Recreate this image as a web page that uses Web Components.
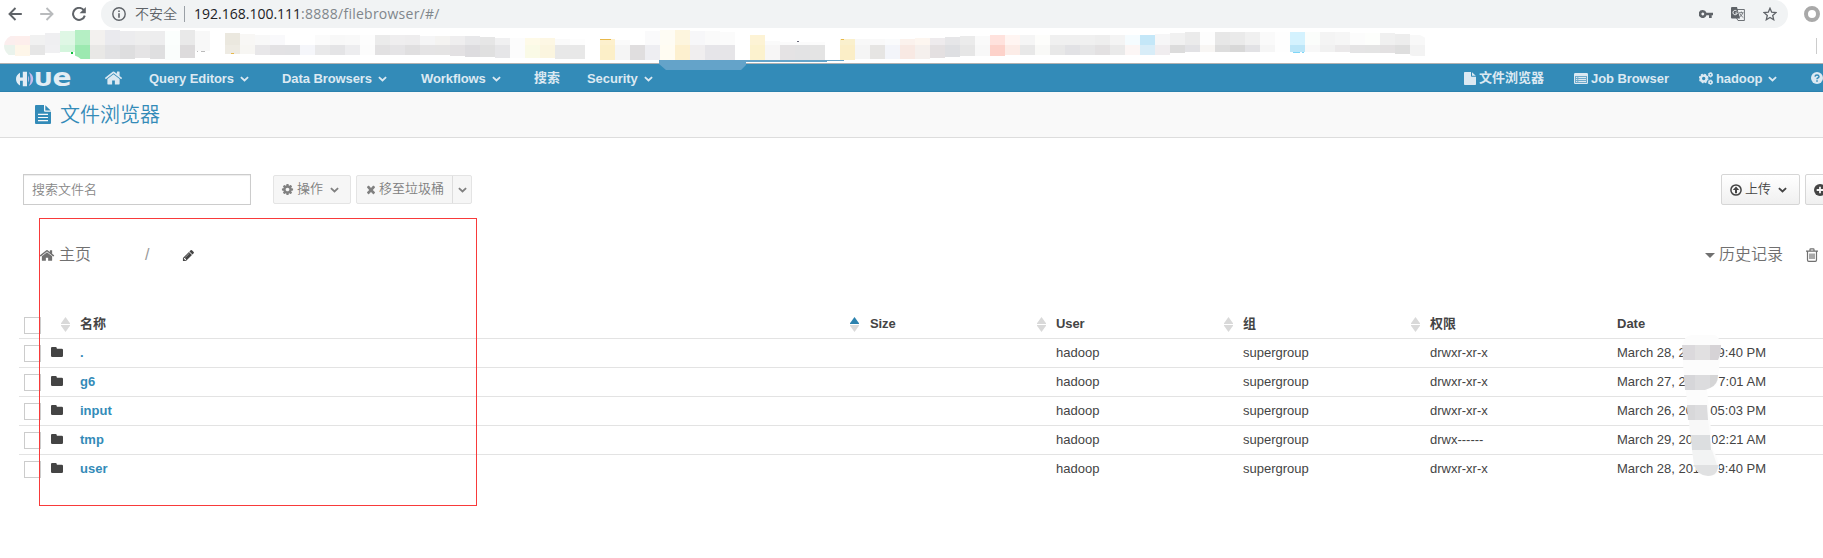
<!DOCTYPE html>
<html lang="zh">
<head>
<meta charset="utf-8">
<title>Hue - 文件浏览器</title>
<style>
html,body{margin:0;padding:0;background:#fff;overflow:hidden}
body{width:1823px;height:558px;font:13px/20px "Liberation Sans","Noto Sans CJK SC",sans-serif;color:#444}
</style>
</head>
<body>
<hue-page></hue-page>
<script>
const ICONS = {
  home:['0 0 1792 1792','<path d="M1472 992v480q0 26-19 45t-45 19h-384v-384h-256v384h-384q-26 0-45-19t-19-45v-480q0-1 .5-3t.5-3l575-474 575 474q1 2 1 6zm223-69l-62 74q-8 9-21 11h-3q-13 0-21-7l-692-577-692 577q-12 8-24 7-13-2-21-11l-62-74q-8-10-7-23.5t11-21.5l719-599q32-26 76-26t76 26l244 204v-195q0-14 9-23t23-9h192q14 0 23 9t9 23v408l219 182q10 8 11 21.5t-7 23.5z"/>'],
  cog:['0 0 1792 1792','<path d="M1152 896q0-106-75-181t-181-75-181 75-75 181 75 181 181 75 181-75 75-181zm512-109v222q0 12-8 23t-20 13l-185 28q-19 54-39 91 35 50 107 138 10 12 10 25t-9 23q-27 37-99 108t-94 71q-12 0-26-9l-138-108q-44 23-91 38-16 136-29 186-7 28-36 28h-222q-14 0-24.5-8.5t-11.5-21.5l-28-184q-49-16-90-37l-141 107q-10 9-25 9-14 0-25-11-126-114-165-168-7-10-7-23 0-12 8-23 15-21 51-66.5t54-70.5q-27-50-41-99l-183-27q-13-2-21-12.5t-8-23.5v-222q0-12 8-23t19-13l186-28q14-46 39-92-40-57-107-138-10-12-10-24 0-10 9-23 26-36 98.5-107.5t94.5-71.5q13 0 26 10l138 107q44-23 91-38 16-136 29-186 7-28 36-28h222q14 0 24.5 8.5t11.5 21.5l28 184q49 16 90 37l142-107q9-9 24-9 13 0 25 10 129 119 165 170 7 8 7 22 0 12-8 23-15 21-51 66.5t-54 70.5q26 50 41 98l183 28q13 2 21 12.5t8 23.5z"/>'],
  times:['0 0 1792 1792','<path d="M1490 1322q0 40-28 68l-136 136q-28 28-68 28t-68-28l-294-294-294 294q-28 28-68 28t-68-28l-136-136q-28-28-28-68t28-68l294-294-294-294q-28-28-28-68t28-68l136-136q28-28 68-28t68 28l294 294 294-294q28-28 68-28t68 28l136 136q28 28 28 68t-28 68l-294 294 294 294q28 28 28 68z"/>'],
  pencil:['0 0 1792 1792','<path d="M491 1536l91-91-235-235-91 91v107h128v128h107zm523-928q0-22-22-22-10 0-17 7l-542 542q-7 7-7 17 0 22 22 22 10 0 17-7l542-542q7-7 7-17zm-54-192l416 416-832 832h-416v-416zm683 96q0 53-37 90l-166 166-416-416 166-165q36-38 90-38 53 0 91 38l235 234q37 39 37 91z"/>'],
  folder:['0 0 12 10','<path d="M1 0h3.600q1 0 1.200 1v.8h5q1.200 0 1.200 1.200v5.800q0 1.200-1.200 1.200H1.200Q0 10 0 8.800V1.200Q0 0 1 0z"/>'],
  chevron:['0 0 9 6','<path d="M.9 1.100L4.500 4.500 8.100 1.100" fill="none" stroke="currentColor" stroke-width="1.800"/>'],
  file:['0 0 12 14','<path d="M.8 0H7v4.300q0 .7.7.7H12v8.200q0 .8-.8.8H.8q-.8 0-.8-.8V.8Q0 0 .8 0zM8 .2L11.800 4H8z"/>'],
  filetext:['0 0 16 20','<path fill-rule="evenodd" d="M1 0h8v6q0 1 1 1h6v12q0 1-1 1H1q-1 0-1-1V1q0-1 1-1zM10.300.3L15.700 5.700h-5.400zM3 9.300v1.300h10V9.300zM3 12.500v1.300h10v-1.300zM3 15.700V17h10v-1.300z"/>'],
  list:['0 0 14 11','<path fill-rule="evenodd" d="M1.200 0h11.600Q14 0 14 1.200v8.600q0 1.200-1.200 1.200H1.200Q0 11 0 9.800V1.200Q0 0 1.200 0zM1 3v7h12V3z"/><path d="M1 3h12v7H1z" opacity=".35"/><path d="M2 4h1.300v1H2zm2.300 0H12v1H4.300zM2 6h1.300v1H2zm2.300 0H12v1H4.300zM2 8h1.300v1H2zm2.300 0H12v1H4.300z"/>'],
  cogs:['0 0 14 13','<g fill="none" stroke="currentColor"><circle cx="4.700" cy="6.500" r="2.900" stroke-width="2.400"/><circle cx="4.700" cy="6.500" r="4.200" stroke-width="1.300" stroke-dasharray="1.900 1.400"/><circle cx="11.500" cy="2.800" r="1.500" stroke-width="1.500"/><circle cx="11.500" cy="2.800" r="2.200" stroke-width=".9" stroke-dasharray="1.300 1"/><circle cx="11.500" cy="10.200" r="1.500" stroke-width="1.500"/><circle cx="11.500" cy="10.200" r="2.200" stroke-width=".9" stroke-dasharray="1.300 1"/></g>'],
  help:['0 0 12 12','<circle cx="6" cy="6" r="6"/><path d="M4 4.600Q4.200 3 6 3t2 1.500Q8 5.400 7 5.900T6 7.200M6 8.200v1.500" fill="none" stroke="#338bb8" stroke-width="1.500"/>'],
  up:['0 0 12 12','<circle cx="6" cy="6" r="5.100" fill="none" stroke="currentColor" stroke-width="1.500"/><path d="M6 2.600L9.200 6H7v3.200H5V6H2.800z"/>'],
  plus:['0 0 12 12','<circle cx="6" cy="6" r="6"/><path d="M6 2.700v6.600M2.700 6h6.600" stroke="#f7f7f7" stroke-width="1.800"/>'],
  caret:['0 0 10 5','<path d="M0 0h10L5 5z"/>'],
  trash:['0 0 12 14','<path d="M0 3.200h12M4 3V1.500Q4 .8 4.700.8h2.600Q8 .8 8 1.500V3M1.500 3.200v8.800q0 1.300 1.200 1.300h6.600q1.200 0 1.200-1.300V3.200M4 5.400v5.700M6 5.400v5.700M8 5.400v5.700" fill="none" stroke="currentColor" stroke-width="1.200"/>'],
  back:['0 0 14 14','<path d="M13.800 7H1.500M7.500 1L1.500 7l6 6" fill="none" stroke="currentColor" stroke-width="1.900"/>'],
  forward:['0 0 14 14','<path d="M.2 7h12.300M6.500 1l6 6-6 6" fill="none" stroke="currentColor" stroke-width="1.900"/>'],
  reload:['0 0 14 14','<path d="M11.800 3.200A6 6 0 1 0 12.800 8.600" fill="none" stroke="currentColor" stroke-width="2"/><path d="M13.800 0v6.200H7.600z"/>'],
  info:['0 0 14 14','<circle cx="7" cy="7" r="6.200" fill="none" stroke="currentColor" stroke-width="1.400"/><path d="M6.200 3.500h1.600V5H6.200zM6.200 6.200h1.600v4.500H6.200z"/>'],
  key:['0 0 14 8','<path fill-rule="evenodd" d="M3.800 0a4 4 0 0 1 3.700 2.700H14v2.600h-1.300V8H10V5.300H7.500A4 4 0 1 1 3.800 0zM3.800 2.600a1.400 1.400 0 1 0 .01 0z"/>'],
  translate:['0 0 14 14','<path d="M6 2.500h7.400v11H7L5.500 11" fill="none" stroke="currentColor" stroke-width=".9"/><path d="M1 0h5l3 11.500H1q-1 0-1-1V1q0-1 1-1z"/><path d="M6 4.400A2.200 2.200 0 1 0 6.300 6H4.300" fill="none" stroke="#f1f3f4" stroke-width="1"/><path d="M8 5.700h4.500M10.300 4.500v1.200M11.800 5.900Q11 8.800 8.300 10M8.800 6.500q1 2.500 3.500 4" fill="none" stroke="currentColor" stroke-width=".8"/>'],
  star:['0 0 14 14','<path d="M7 1.200l1.700 4 4.300.4-3.300 2.800 1 4.300L7 10.400l-3.700 2.300 1-4.300L1 5.600l4.300-.4z" fill="none" stroke="currentColor" stroke-width="1.300"/>'],
  ring:['0 0 16 16','<circle cx="8" cy="8" r="6" fill="none" stroke="currentColor" stroke-width="4"/>']
};

class UiIcon extends HTMLElement{
  connectedCallback(){
    const [box,body]=ICONS[this.getAttribute('name')];
    const w=this.getAttribute('w'),h=this.getAttribute('h')||w;
    this.attachShadow({mode:'open'}).innerHTML=`<style>:host{display:block;flex:none;width:${w}px;height:${h}px}svg{display:block}</style>
    <svg width="${w}" height="${h}" viewBox="${box}" fill="currentColor" preserveAspectRatio="none">${body}</svg>`;
  }
}
customElements.define('ui-icon',UiIcon);

const define=(name,html)=>customElements.define(name,class extends HTMLElement{
  constructor(){
    super();
    const t=document.createElement('template');
    t.innerHTML=typeof html==='function'?html():html;
    this.attachShadow({mode:'open'}).append(t.content.cloneNode(true));
  }
});

define('browser-bar',`<style>
:host{display:flex;height:28px;align-items:center;background:#fff;color:#5f6368;padding-left:8px;box-sizing:border-box}
.f{color:#b9bbbd;margin:0 18px}
.pill{flex:none;margin-left:15px;width:1687px;height:28px;box-sizing:border-box;background:#f1f3f4;border-radius:14px;display:flex;align-items:center;padding:0 11px 0 11px}
.warn{font:14px/28px "Noto Sans CJK SC",sans-serif;font-weight:350;margin:-2px 0 0 9px;width:42px;white-space:nowrap}
.sep{width:1px;height:16px;background:#9aa0a6;margin:0 9px 0 7px}
.url{font:14px/26px "Open Sans",sans-serif;color:#80868b;white-space:nowrap;flex:1;letter-spacing:.25px}
.url b{font-weight:400;color:#202124;letter-spacing:0}
</style>
<ui-icon name="back" w="14"></ui-icon><ui-icon class="f" name="forward" w="14"></ui-icon><ui-icon name="reload" w="14"></ui-icon>
<div class="pill"><ui-icon name="info" w="14"></ui-icon><span class="warn">不安全</span><span class="sep"></span><span class="url"><b>192.168.100.111</b>:8888/filebrowser/#/</span>
<ui-icon name="key" w="14" h="8"></ui-icon><ui-icon name="translate" w="14" style="margin:0 18px"></ui-icon><ui-icon name="star" w="14"></ui-icon></div>
<ui-icon name="ring" w="16" style="margin-left:16px;color:#a9a9a9"></ui-icon>`);

/* Blurred bookmarks: column index, top y, bottom y, upper shade, lower shade. */
const CELLS=`0 36 55 fbeeee eaf3ec|1 36 56 fdeeec fef6e9|2 35 55 f1f1f1 e6e6e6|3 33 53 efeff1 f0f0f2|4 31 52 dff7e5 d4f5dd|5 30 59 b5efc4 9ce9b0|6 30 59 f3f1ef e9e8e6|7 30 59 eaeaee e2e2e4|8 31 59 ececee dededf|9 31 58 eeeeee e5e4e5|10 31 59 ededee dfdfe0|11 31 60 fbfefd fafdfc|12 30 58 e9e9e9 dddbdc|13 31 51 f8f8f8 f8f8f8|15 33 54 ebe8df eeebe3|16 34 54 f8f7f5 f7f6f3|17 35 55 f8f8f8 e8e7e9|18 35 55 f9f9fb e3e2e4|19 45 55 ffffff e2e2e4|20 45 55 ffffff f5f6fa|21 35 55 fbfbfb e9e9ea|22 35 55 f8f8f8 e4e4e6|23 35 55 f9f9f9 ededef|24 35 55 fdfdfd fcfcfc|25 35 55 ebebeb e2e1e2|26 35 55 efeeef e5e4e6|27 35 55 eeedee e0dfe0|28 36 55 f5f5f6 e5e4e5|29 36 55 f4f3f1 e5e4e4|30 36 56 efeeef e3e1e3|31 36 57 e8e8ea dddcdf|32 37 57 e6e6e6 e0e0e0|33 38 58 f0f0f1 e6e6e8|34 38 58 fcfcfc fcfcfc|35 38 58 fefae8 fafae6|36 38 58 fdf7e4 fbf5df|37 39 59 fafafa e8e8e8|38 39 59 fdfdfd e8e8e8|40 39 60 fdf0cd fcefc8|41 40 60 fafafa f5f5f5|42 45 60 ffffff e0dedf|43 31 60 fafafb eeeef2|44 30 60 fefcf4 fffcf2|45 30 60 fdf5de fdf0cf|46 31 60 f7f7f9 f0eeef|47 31 60 fafafa e6e5e9|48 32 60 fbfbfb e6e5e8|50 35 60 fdf3d5 fcf2ce|51 41 60 fafafa f7f6f6|52 42 60 fbfbfb e5e3e4|53 42 60 fbfbfb e3e3e4|54 42 60 fcfcfc e4e4e4|56 39 60 faf0cd fbeec7|57 39 59 f8f8f8 f5f5f5|58 39 59 f9f9f9 e6e5e3|59 39 59 fafbfc f3f5fa|60 39 59 fbf2ed f8e9e3|61 38 59 fdf6f0 f5f0ed|62 38 58 eeebed e4e0e1|63 37 57 e6e6e8 dedfe2|64 36 56 ebebeb e6e6e6|65 36 56 fafafa f8f8f8|66 35 56 ffe2dd fdd2ca|67 35 55 fff5f2 fcece7|68 35 55 f5f5f5 e8e8e8|69 35 55 fdfdfb f9f9f7|70 35 55 f0f0f0 e8e8e8|71 35 55 f0f0f0 e2e2e5|72 35 55 f0f0f0 e6e6e7|73 35 55 eeeeee e3e1e2|74 35 55 f4f4f4 eaeaea|75 35 55 f5fcff fcf6f5|76 35 55 c4e7f8 d8edf8|77 34 55 f6f6f7 f0edef|78 33 53 f1f1f1 dcdcdc|79 32 52 ebebeb e2e2e5|80 32 52 fdfdfd f8f6f4|81 32 52 e7e7e7 dddddd|82 32 52 eaeaea d8d8d8|83 32 52 f0f0f0 e2e2e5|84 32 52 fafafa f6f6f6|85 32 52 fefefe fefefe|86 32 52 d4f2fe bce6f8|87 32 52 fbfdfb f8f8f8|88 32 52 f4f4f4 f1f1f1|89 32 52 f6f6f6 ebe9ea|90 33 53 fcfcfc e5e4e5|91 33 53 fdfefc e4e4e4|92 33 53 f0f0f0 e3e1e2|93 34 54 ededed dedede|94 35 56 f8f8f8 f3f3f3`;
define('bookmark-strip',()=>`<style>
:host{display:flex;height:35px;border-bottom:1px solid #b1b1b1;background:#fff;justify-content:space-between;align-items:center}
svg{display:block;flex:none;overflow:visible}
i{width:1px;height:16px;background:#ccc;margin-right:6px}
</style><svg width="1440" height="35" viewBox="0 28 1440 35" shape-rendering="crispEdges">
<clipPath id="ends"><path d="M4 46Q5 36 15 35L75 28H1400Q1425 36 1425 38V59L1405 54H1395L1230 60H82Q75 53 60 53L30 57H12Q4 53 4 46z"/></clipPath>
<g clip-path="url(#ends)">${CELLS.split('|').map(c=>{const[k,a,b,u,l]=c.split(' ');return `${a<45?`<rect x="${k*15}" y="${a}" width="15" height="${45-a}" fill="#${u}"/>`:''}<rect x="${k*15}" y="45" width="15" height="${b-45}" fill="#${l}"/>`}).join('')}</g>
<path fill="#10c03c" d="M71 52h2v2h-2z"/><path fill="#e8b84a" d="M231 53h3v1h-3zM600 39h11v1h-11zM841 39h3v1h-3z"/><path fill="#667" d="M797 41h2v1h-2z"/><path fill="#7fd6f7" d="M1293 52h7v1h-7zM1302 52h2v1h-2z"/><path fill="#bbb" d="M197 51h1v1h-1zM201 51h4v1h-4z"/></svg><i></i>`);

define('hue-logo',`<style>:host{display:block;width:56px;height:16px}svg{display:block;overflow:visible}</style>
<svg width="56" height="16" viewBox="0 0 56 16"><path fill="#e3edf4" d="M4 1.800Q0 4 0 8t4 6.500V9.800H6.800v5.400H11V.8H6.800v5.600H4z"/><path fill="#c7bcea" d="M12.800 1Q17.200 3.500 17.200 8t-4.400 7q1.800-2.800 1.800-7t-1.800-7z"/><path fill="#b4b6e4" d="M12 4.500q2.400 3.500 0 7z"/>
<text x="17.800" y="15" font-family="DejaVu Sans" font-weight="700" font-size="19.200" fill="#e3edf4" textLength="19" lengthAdjust="spacingAndGlyphs">U</text><text x="36.500" y="15" font-family="DejaVu Sans" font-weight="700" font-size="24" fill="#e3edf4" textLength="19" lengthAdjust="spacingAndGlyphs">e</text></svg>`);

define('nav-item',`<style>:host{display:flex;align-items:center;white-space:nowrap;flex:none;gap:3px}
::slotted(ui-icon[name=chevron]){margin:1px 0 0 3px}</style><slot></slot>`);

define('nav-bar',`<style>
:host{display:flex;height:28px;align-items:center;background:#338bb8;box-shadow:inset 0 -1px #2c82ae;color:#dce9f2;font-weight:700;position:relative;overflow:visible}
hue-logo{margin-left:16px;width:88px;flex:none;margin-top:2px}
.t{letter-spacing:-.08px;padding-top:1px}
.smear{position:absolute;left:659px;top:-4px}
</style>
<hue-logo></hue-logo>
<nav-item style="width:45px"><ui-icon name="home" w="19" h="18"></ui-icon></nav-item>
<nav-item class="t" style="width:133px">Query Editors<ui-icon name="chevron" w="9" h="6"></ui-icon></nav-item>
<nav-item class="t" style="width:139px">Data Browsers<ui-icon name="chevron" w="9" h="6"></ui-icon></nav-item>
<nav-item class="t" style="width:113px">Workflows<ui-icon name="chevron" w="9" h="6"></ui-icon></nav-item>
<nav-item style="width:53px">搜索</nav-item>
<nav-item class="t" style="width:877px">Security<ui-icon name="chevron" w="9" h="6"></ui-icon></nav-item>
<nav-item style="width:110px"><ui-icon name="file" w="12" h="13"></ui-icon>文件浏览器</nav-item>
<nav-item class="t" style="width:125px"><ui-icon name="list" w="14" h="11" style="margin-top:-1px"></ui-icon>Job Browser</nav-item>
<nav-item class="t" style="width:112px"><ui-icon name="cogs" w="14" h="13"></ui-icon>hadoop<ui-icon name="chevron" w="9" h="6"></ui-icon></nav-item>
<nav-item><ui-icon name="help" w="12"></ui-icon></nav-item>
<svg class="smear" width="190" height="10"><path fill="#64a3c9" d="M0 0h185v1h-17v1H87v3l-5 5H7L0 4z"/></svg>`);

define('page-title',`<style>
:host{display:flex;height:45px;border-bottom:1px solid #ddd;background:#f9f9f9;align-items:center;color:#338bb8;padding-left:35px;font:350 20px/45px "Noto Sans CJK SC",sans-serif;gap:9px}
span{margin-top:-2px}</style>
<ui-icon name="filetext" w="16" h="19"></ui-icon><span><slot></slot></span>`);

define('tool-button',`<style>
:host{display:flex;box-sizing:border-box;align-items:center;white-space:nowrap;flex:none;height:31px;border:1px solid #d6d6d6;border-radius:2px;background:linear-gradient(#fff,#f0f0f0);color:#444;padding:0 8px;font-size:13px;font-weight:350;gap:3px;line-height:28px}
:host([disabled]){height:29px;background:#f6f6f6;border-color:#e4e4e4;color:#808080}
span.t{margin-top:-1px}
::slotted(ui-icon[name=chevron]){margin:0 0 0 4px}
::slotted(.split){display:flex;align-items:center;align-self:stretch;border-left:1px solid #ddd;margin-left:5px}
</style><slot></slot>`);

define('tool-row',`<style>
:host{display:flex;height:31px;align-items:center;margin:36px 0 0 23px}
input{box-sizing:border-box;width:228px;height:31px;border:1px solid #ccc;box-shadow:inset 0 1px 1px rgba(0,0,0,.075);padding:0 8px 2px;margin:0 22px 0 0;font:350 13px "Noto Sans CJK SC",sans-serif;flex:none;background:#fff}
input::placeholder{color:#888}
.sp{width:1249px;flex:none}
b{font-weight:350;margin-top:-2px}
</style>
<input placeholder="搜索文件名">
<tool-button disabled style="width:78px;padding-left:7px"><ui-icon name="cog" w="13"></ui-icon><b>操作</b><ui-icon name="chevron" w="9" h="6"></ui-icon></tool-button>
<tool-button disabled style="width:116px;margin-left:5px"><ui-icon name="times" w="12" h="13"></ui-icon><b style="margin-left:-1px">移至垃圾桶</b><span class="split"><ui-icon name="chevron" w="9" h="6" style="margin-left:5px"></ui-icon></span></tool-button>
<span class="sp"></span>
<tool-button style="width:79px"><ui-icon name="up" w="12"></ui-icon><b>上传</b><ui-icon name="chevron" w="9" h="6"></ui-icon></tool-button>
<tool-button style="width:79px;margin-left:5px"><ui-icon name="plus" w="12"></ui-icon></tool-button>`);

define('crumb-row',`<style>
:host{display:flex;height:30px;align-items:center;margin-top:35px;padding-left:39px;color:#707070;font-size:16px;font-weight:350}
span{white-space:nowrap;flex:none}
</style>
<ui-icon name="home" w="16" h="15"></ui-icon><span style="width:86px;margin-left:4px">主页</span><span style="width:37px;color:#999">/</span>
<ui-icon name="pencil" w="13" style="color:#444"></ui-icon>
<ui-icon name="caret" w="10" h="5" style="margin-left:1510px"></ui-icon><span style="width:87px;margin-left:4px">历史记录</span><ui-icon name="trash" w="12" h="14"></ui-icon>`);

customElements.define('sort-arrows',class extends HTMLElement{
  connectedCallback(){
    this.attachShadow({mode:'open'}).innerHTML=`<style>:host{display:block;width:9px;height:15px;flex:none}svg{display:block}</style>
    <svg width="9" height="15"><path fill="${this.hasAttribute('asc')?'#2c82ae':'#d9d9d9'}" d="M4.500 0L9.500 7H-.5z"/><path fill="#d9d9d9" d="M-.5 8h10l-5 7z"/></svg>`;
  }
});

define('file-row',`<style>
:host{display:grid;grid-template-columns:32px 24px 976px 187px 187px 187px 1fr;height:28px;line-height:28px;border-bottom:1px solid #e3e3e3;padding-left:5px}
:host([last]){border-bottom-color:transparent}
.box{width:15px;height:15px;border:1px solid #ccc;background:#fff;margin-top:6px}
ui-icon{margin:8px 0 0 -5px;color:#444}
.n{font-weight:700;color:#338bb8}
.d{display:flex;justify-content:space-between;width:149px;white-space:nowrap}
</style>
<span class="box"></span><ui-icon name="folder" w="12" h="10"></ui-icon><span class="n"><slot name="n"></slot></span>
<span>hadoop</span><span>supergroup</span><span><slot name="p"></slot></span>
<span class="d"><slot name="d1"></slot><slot name="d2"></slot></span>`);

define('file-head',`<style>
:host{display:flex;height:28px;border-bottom:1px solid #e3e3e3;padding-left:5px;font-weight:700;line-height:28px;color:#444;white-space:nowrap}
.box{width:15px;height:15px;border:1px solid #ccc;margin:7px 20px 0 0;flex:none}
sort-arrows{margin:7px 11px 0 0}
.c{width:167px;flex:none;letter-spacing:-.1px}
</style>
<span class="box"></span><sort-arrows style="margin-right:10px"></sort-arrows><span style="width:770px">名称</span>
<sort-arrows asc></sort-arrows><span class="c">Size</span><sort-arrows style="margin-right:10px"></sort-arrows><span class="c" style="width:168px">User</span><sort-arrows style="margin-right:10px"></sort-arrows><span class="c" style="width:168px">组</span><sort-arrows style="margin-right:10px"></sort-arrows><span style="width:187px">权限</span><span>Date</span>`);

define('file-table',()=>`<style>:host{display:block;margin:40px 0 0 19px}</style>
<file-head></file-head>
${[['.','drwxr-xr-x','March 28, 2','9:40 PM'],['g6','drwxr-xr-x','March 27, 2','7:01 AM'],['input','drwxr-xr-x','March 26, 20','05:03 PM'],['tmp','drwx------','March 29, 20','02:21 AM'],['user','drwxr-xr-x','March 28, 201','9:40 PM']].map((r,i)=>`<file-row${i==4?' last':''}><span slot="n">${r[0]}</span><span slot="p">${r[1]}</span><span slot="d1">${r[2]}</span><span slot="d2">${r[3]}</span></file-row>`).join('')}`);

define('date-smudge',`<style>:host{position:absolute;left:1680px;top:334px}svg{display:block}</style>
<svg width="44" height="144" viewBox="1680 334 44 144"><path fill="#fcfcfc" d="M1683 345Q1684 335 1692 335H1715Q1720 338 1721 345L1718 380Q1716 388 1707 389L1713 450Q1719 460 1719 468T1708 476T1694 465L1683 365z"/>
<path fill="#dbd9dc" d="M1682 345h13v15h-12z"/><path fill="#e1e0e1" d="M1695 345h15v15h-15z"/><path fill="#d6d3d6" d="M1710 345h11q0 10-3 15h-8z"/>
<path fill="#d6d6d9" d="M1684 375h11v15h-10z"/><path fill="#dcdcde" d="M1695 375h15v13l-5 2h-10z"/><path fill="#d5d5d6" d="M1710 375h8q0 10-8 13z"/>
<path fill="#d8d8da" d="M1687 405h8v15h-7z"/><path fill="#dcdcde" d="M1695 405h12l1 15h-13z"/><path fill="#f8f8f8" d="M1689 420h19l2 15h-20z"/>
<path fill="#dcdee0" d="M1691 435h19l1 15h-19z"/><path fill="#f2f3f3" d="M1692 450h20l5 15h-23z"/><path fill="#e0e1e2" d="M1694 465h24q0 11-10 11t-14-11z"/></svg>`);

define('hue-page',`<style>
:host{display:block;width:1823px;height:558px;position:relative;overflow:hidden;background:#fff}
.mark{position:absolute;left:39px;top:218px;width:436px;height:286px;border:1px solid #f83a3a;pointer-events:none}
</style>
<browser-bar></browser-bar><bookmark-strip></bookmark-strip><nav-bar></nav-bar><page-title>文件浏览器</page-title>
<tool-row></tool-row><crumb-row></crumb-row><file-table></file-table><date-smudge></date-smudge><div class="mark"></div>`);
</script>
</body>
</html>
